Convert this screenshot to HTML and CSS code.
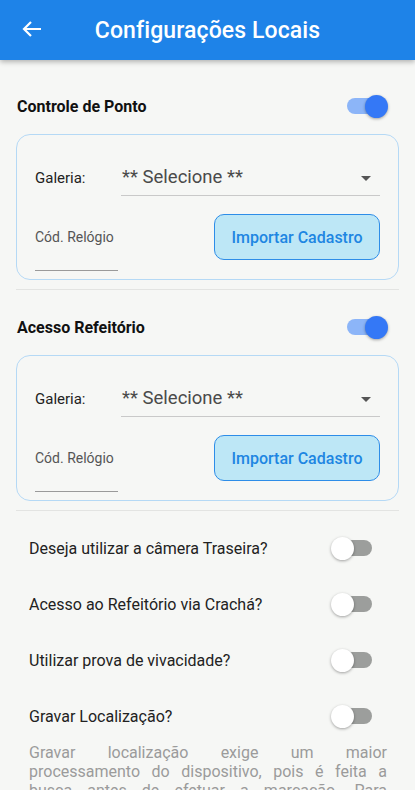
FILE: index.html
```html
<!DOCTYPE html>
<html lang="pt-BR">
<head>
    <meta charset="UTF-8">
    <title>Configurações Locais</title>
    <link rel="stylesheet" href="styles.css">
</head>
<body>
<header class="appbar">
    <button class="back" aria-label="Voltar">
        <svg width="22" height="22" viewBox="0 0 22 22">
            <path d="M20 11H3M10 4L3 11l7 7" fill="none" stroke="#fff" stroke-width="2.2"/>
        </svg>
    </button>
    <h1>Configurações Locais</h1>
</header>

<main class="content">
    <section class="group">
        <div class="group-head">
            <span>Controle de Ponto</span>
            <span class="switch on"><span class="thumb"></span></span>
        </div>
        <div class="card">
            <div class="card-row">
                <span class="field-label">Galeria:</span>
                <div class="select">
                    <span>** Selecione **</span>
                    <span class="caret"></span>
                </div>
            </div>
            <div class="card-row bottom">
                <div class="code-field">Cód. Relógio</div>
                <button class="import">Importar Cadastro</button>
            </div>
        </div>
    </section>

    <hr class="divider">

    <section class="group">
        <div class="group-head">
            <span>Acesso Refeitório</span>
            <span class="switch on"><span class="thumb"></span></span>
        </div>
        <div class="card">
            <div class="card-row">
                <span class="field-label">Galeria:</span>
                <div class="select">
                    <span>** Selecione **</span>
                    <span class="caret"></span>
                </div>
            </div>
            <div class="card-row bottom">
                <div class="code-field">Cód. Relógio</div>
                <button class="import">Importar Cadastro</button>
            </div>
        </div>
    </section>

    <hr class="divider">

    <ul class="options">
        <li><span>Deseja utilizar a câmera Traseira?</span><span class="switch"><span class="thumb"></span></span></li>
        <li><span>Acesso ao Refeitório via Crachá?</span><span class="switch"><span class="thumb"></span></span></li>
        <li><span>Utilizar prova de vivacidade?</span><span class="switch"><span class="thumb"></span></span></li>
        <li><span>Gravar Localização?</span><span class="switch"><span class="thumb"></span></span></li>
    </ul>

    <p class="note">Gravar localização exige um maior processamento do dispositivo, pois é feita a busca antes de efetuar a marcação. Para dispositivos mais simples, recomendamos deixar esta opção desativada.</p>
</main>
</body>
</html>
```

FILE: styles.css
```css
* {
    margin: 0;
    padding: 0;
    box-sizing: border-box;
}

body {
    background: #f6f7f5;
    font-family: Roboto, "Liberation Sans", sans-serif;
    color: #222;
    overflow: hidden;
}

.appbar {
    height: 60px;
    background: #1e83e8;
    display: flex;
    align-items: center;
    justify-content: center;
    position: relative;
    box-shadow: 0 2px 5px rgba(0, 0, 0, 0.28);
}

.appbar h1 {
    color: #fff;
    font-size: 23px;
    font-weight: 500;
    letter-spacing: 0.1px;
}

.back {
    position: absolute;
    left: 21px;
    top: 18px;
    background: none;
    border: none;
    width: 22px;
    height: 22px;
}

.back svg {
    display: block;
}

.content {
    padding: 26px 16px 0 16px;
}

.group-head {
    height: 40px;
    display: flex;
    align-items: center;
    justify-content: space-between;
    padding-left: 1px;
    padding-right: 11px;
    font-size: 16px;
    font-weight: 700;
    color: #111;
}

.group + .divider + .group {
    margin-top: 17px;
}

.switch {
    position: relative;
    width: 42px;
    height: 23px;
    display: inline-block;
}

.switch::before {
    content: "";
    position: absolute;
    left: 1px;
    top: 3.5px;
    width: 40px;
    height: 16px;
    border-radius: 8px;
    background: #9c9e9c;
}

.switch .thumb {
    position: absolute;
    left: 0;
    top: 0;
    width: 23px;
    height: 23px;
    border-radius: 50%;
    background: #fff;
    box-shadow: 0 1px 3px rgba(0, 0, 0, 0.35);
}

.switch.on::before {
    background: #8cb5f8;
}

.switch.on .thumb {
    left: auto;
    right: 0;
    background: #3478f6;
}

.card {
    margin-top: 8px;
    border: 1px solid #b5d9f5;
    border-radius: 14px;
    padding: 24px 18px 8px 18px;
}

.card-row {
    display: flex;
    align-items: center;
}

.card-row.bottom {
    margin-top: 18px;
    align-items: flex-start;
    justify-content: space-between;
}

.field-label {
    width: 86px;
    font-size: 15px;
    color: #222;
}

.select {
    flex: 1;
    height: 37px;
    display: flex;
    align-items: center;
    justify-content: space-between;
    border-bottom: 1px solid #c9c9c9;
    font-size: 18.5px;
    color: #4a4a4a;
    padding-left: 1px;
    padding-right: 9px;
}

.caret {
    width: 0;
    height: 0;
    border-left: 5px solid transparent;
    border-right: 5px solid transparent;
    border-top: 5px solid #555;
    margin-top: 2px;
}

.code-field {
    width: 83px;
    height: 57px;
    line-height: 46px;
    font-size: 14px;
    color: #555;
    border-bottom: 1px solid #9a9a9a;
}

.import {
    width: 166px;
    height: 46px;
    background: #bde7f6;
    border: 1px solid #2d8de8;
    border-radius: 10px;
    color: #1e86e2;
    font-family: Roboto, "Liberation Sans", sans-serif;
    font-size: 16px;
    font-weight: 500;
}

.divider {
    border: none;
    border-top: 1px solid #e3e4e2;
    margin-top: 9px;
}

.options {
    list-style: none;
    padding-top: 9px;
}

.options li {
    height: 56px;
    display: flex;
    align-items: center;
    justify-content: space-between;
    padding-left: 13px;
    padding-right: 26px;
    font-size: 16px;
    color: #222;
}

.note {
    margin: -1px 12px 0 13px;
    font-size: 16px;
    line-height: 19px;
    color: #9b9b9b;
    text-align: justify;
}
```
